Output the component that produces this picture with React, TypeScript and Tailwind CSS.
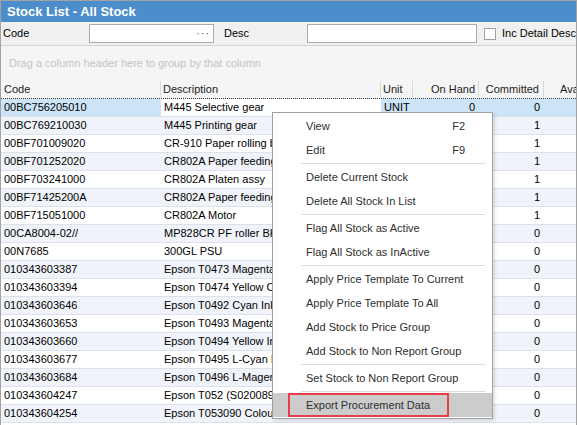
import React from 'react';

const FONT = '[font-family:"Liberation_Sans",Arial,sans-serif]';

interface StockRow {
    code: string;
    desc: string;
    unit: string;
    onHand: number;
    committed: number;
}

const rows: StockRow[] = [
    { code: '00BC756205010', desc: 'M445 Selective gear', unit: 'UNIT', onHand: 0, committed: 0 },
    { code: '00BC769210030', desc: 'M445 Printing gear', unit: 'UNIT', onHand: 0, committed: 1 },
    { code: '00BF701009020', desc: 'CR-910 Paper rolling belt', unit: 'UNIT', onHand: 0, committed: 1 },
    { code: '00BF701252020', desc: 'CR802A Paper feeding roller', unit: 'UNIT', onHand: 0, committed: 1 },
    { code: '00BF703241000', desc: 'CR802A Platen assy', unit: 'UNIT', onHand: 0, committed: 1 },
    { code: '00BF71425200A', desc: 'CR802A Paper feeding gear', unit: 'UNIT', onHand: 0, committed: 1 },
    { code: '00BF715051000', desc: 'CR802A Motor', unit: 'UNIT', onHand: 0, committed: 1 },
    { code: '00CA8004-02//', desc: 'MP828CR PF roller BK', unit: 'UNIT', onHand: 0, committed: 0 },
    { code: '00N7685', desc: '300GL PSU', unit: 'UNIT', onHand: 0, committed: 0 },
    { code: '010343603387', desc: 'Epson T0473 Magenta Cartridge', unit: 'UNIT', onHand: 0, committed: 0 },
    { code: '010343603394', desc: 'Epson T0474 Yellow Cartridge', unit: 'UNIT', onHand: 0, committed: 0 },
    { code: '010343603646', desc: 'Epson T0492 Cyan Ink', unit: 'UNIT', onHand: 0, committed: 0 },
    { code: '010343603653', desc: 'Epson T0493 Magenta Ink', unit: 'UNIT', onHand: 0, committed: 0 },
    { code: '010343603660', desc: 'Epson T0494 Yellow Ink', unit: 'UNIT', onHand: 0, committed: 0 },
    { code: '010343603677', desc: 'Epson T0495 L-Cyan Ink', unit: 'UNIT', onHand: 0, committed: 0 },
    { code: '010343603684', desc: 'Epson T0496 L-Magenta Ink', unit: 'UNIT', onHand: 0, committed: 0 },
    { code: '010343604247', desc: 'Epson T052 (S020089/S020191)', unit: 'UNIT', onHand: 0, committed: 0 },
    { code: '010343604254', desc: 'Epson T053090 Colour Ink', unit: 'UNIT', onHand: 0, committed: 0 },
];

type MenuEntry = { label: string; key?: string; active?: boolean } | 'sep';

const menu: MenuEntry[] = [
    { label: 'View', key: 'F2' },
    { label: 'Edit', key: 'F9' },
    'sep',
    { label: 'Delete Current Stock' },
    { label: 'Delete All Stock In List' },
    'sep',
    { label: 'Flag All Stock as Active' },
    { label: 'Flag All Stock as InActive' },
    'sep',
    { label: 'Apply Price Template To Current' },
    { label: 'Apply Price Template To All' },
    { label: 'Add Stock to Price Group' },
    { label: 'Add Stock to Non Report Group' },
    'sep',
    { label: 'Set Stock to Non Report Group' },
    'sep',
    { label: 'Export Procurement Data', active: true },
];

const ContextMenu: React.FC = () => (
    <div className="absolute left-[271px] top-[111px] w-[221px] bg-white border border-[#a0a0a0] py-[1px] shadow-[2px_2px_3px_rgba(0,0,0,0.12)]">
        {menu.map((m, i) =>
            m === 'sep' ? (
                <div key={i} className="h-[3px] flex items-center pl-[28px] pr-[7px]">
                    <div className="h-px w-full bg-[#dcdcdc]" />
                </div>
            ) : (
                <div key={i}
                    className={`relative h-[24px] flex items-center justify-between pl-[33px] pr-[27px] text-[#2e2e2e] ${m.active ? 'bg-[#cccccc]' : ''}`}>
                    <span>{m.label}</span>
                    {m.key && <span>{m.key}</span>}
                    {m.active && (
                        <div className="absolute left-[15px] top-0 w-[161px] h-[24px] border-2 border-[#e5404a]" />
                    )}
                </div>
            )
        )}
    </div>
);

export default function App() {
    return (
        <div className={`relative w-[577px] h-[425px] overflow-hidden bg-white border border-b-0 border-[#a3a3a3] text-[11px] text-black ${FONT}`}>
            {/* Title */}
            <div className="h-[21px] bg-[#4c8ecb] flex items-center pl-[6px]">
                <span className="text-white font-bold text-[13px]">Stock List - All Stock</span>
            </div>

            {/* Filter row */}
            <div className="h-[24px] bg-[#f0f0f0] border-b border-[#d4d4d4] flex items-center">
                <span className="w-[88px] pl-[2px]">Code</span>
                <div className="w-[125px] h-[19px] bg-white border border-[#ababab] flex items-center justify-end pr-[3px] text-[#555] tracking-[1px] leading-none">
                    ···
                </div>
                <span className="w-[93px] pl-[10px]">Desc</span>
                <div className="w-[170px] h-[19px] bg-white border border-[#ababab]" />
                <div className="ml-[7px] w-[12px] h-[12px] bg-white border border-[#a0a0a0]" />
                <span className="ml-[6px] whitespace-nowrap">Inc Detail Desc</span>
            </div>

            {/* Group panel */}
            <div className="h-[34px] bg-[#f5f5f5] flex items-center pl-[8px] text-[#c4c4c4]">
                Drag a column header here to group by that column
            </div>

            {/* Header */}
            <div className="h-[19px] bg-[#f5f5f5] flex items-stretch text-[#222] border-b border-dotted border-[#333]">
                <div className="w-[160px] pl-[3px] flex items-center border-r border-[#d8d8d8] my-[1px]">Code</div>
                <div className="w-[220px] pl-[2px] flex items-center border-r border-[#d8d8d8] my-[1px]">Description</div>
                <div className="w-[32px] pl-[2px] flex items-center border-r border-[#d8d8d8] my-[1px]">Unit</div>
                <div className="w-[66px] pr-[3px] flex items-center justify-end border-r border-[#d8d8d8] my-[1px]">On Hand</div>
                <div className="w-[65px] pr-[4px] flex items-center justify-end border-r border-[#d8d8d8] my-[1px]">Committed</div>
                <div className="flex-1 pl-[16px] flex items-center overflow-hidden whitespace-nowrap">Available</div>
            </div>

            {/* Rows */}
            <div className="flex flex-col">
                {rows.map((r, i) => {
                    const sel = i === 0;
                    const rowBg = sel ? 'bg-[#cce4f7]' : i % 2 === 1 ? 'bg-[#f0f4fa]' : 'bg-white';
                    return (
                        <div key={r.code} className={`h-[18px] flex items-center border-b border-[#dde2e8] ${rowBg}`}>
                            <div className="w-[160px] pl-[3px] whitespace-nowrap overflow-hidden">{r.code}</div>
                            <div className={`w-[220px] h-full flex items-center pl-[3px] whitespace-nowrap overflow-hidden ${sel ? 'bg-white' : ''}`}>{r.desc}</div>
                            <div className="w-[32px] pl-[3px] whitespace-nowrap overflow-hidden">{r.unit}</div>
                            <div className="w-[66px] pr-[4px] text-right">{r.onHand}</div>
                            <div className="w-[65px] pr-[4px] text-right">{r.committed}</div>
                            <div className="flex-1" />
                        </div>
                    );
                })}
            </div>

            <ContextMenu />
        </div>
    );
}
